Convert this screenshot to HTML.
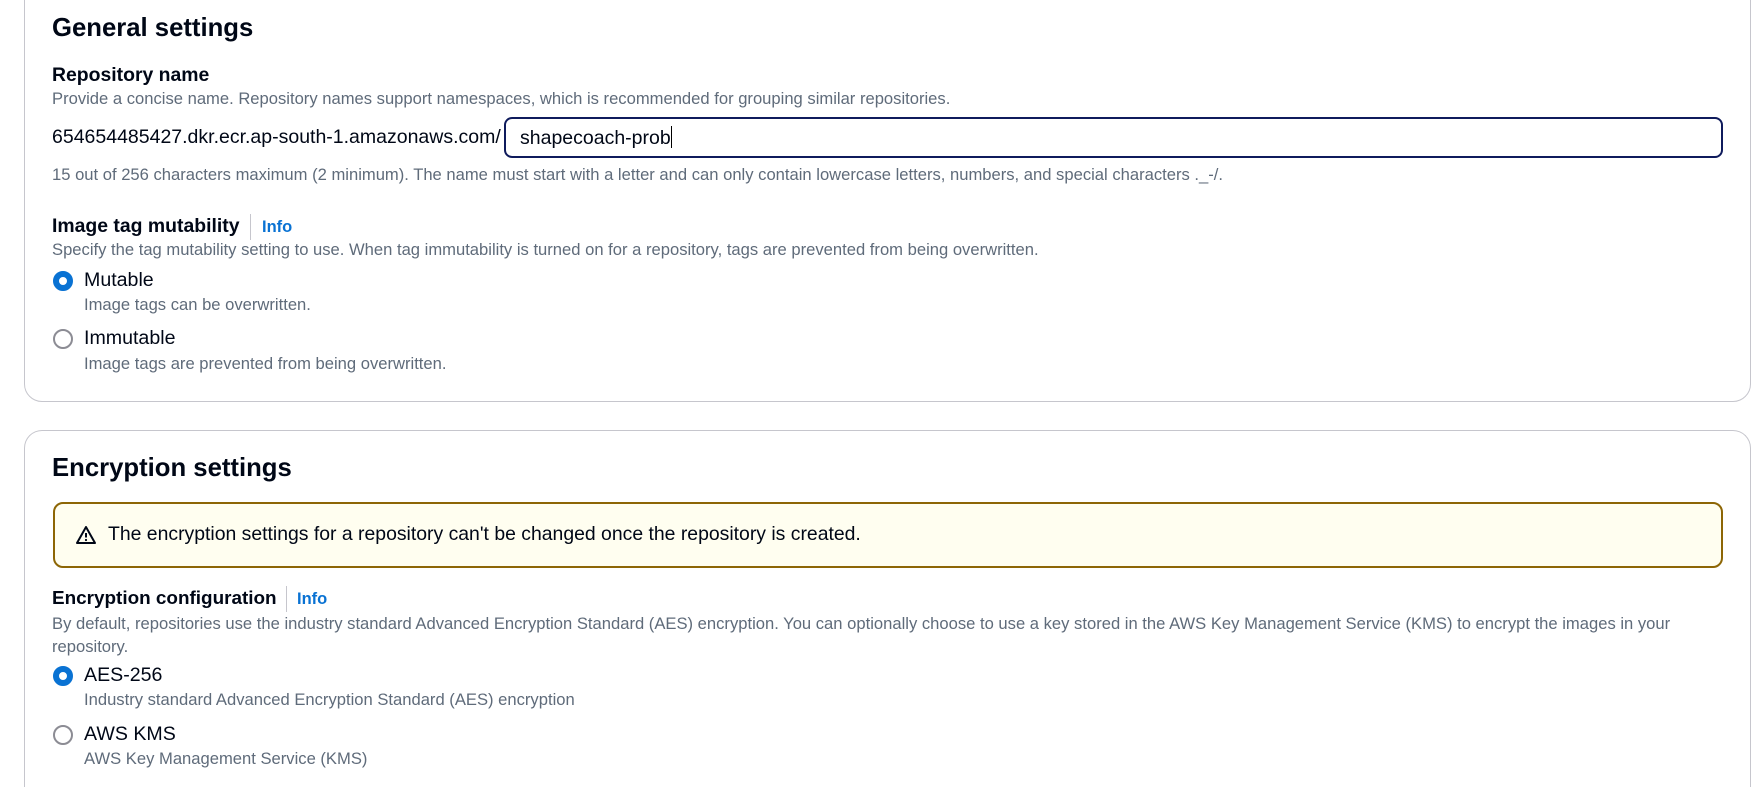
<!DOCTYPE html>
<html><head><meta charset="utf-8"><style>
*{box-sizing:border-box;margin:0;padding:0}
html,body{width:1760px;height:787px;overflow:hidden}
body{background:#fff;font-family:"Liberation Sans",sans-serif;color:#000716;position:relative}
.panel{position:absolute;left:24px;width:1727px;border:1px solid #c6c6cd;border-radius:18px;background:#fff}
.a{position:absolute;white-space:nowrap}
.h{font-size:25.7px;font-weight:bold;left:52px}
.lb{font-size:19.4px;font-weight:bold;left:52px}
.d{font-size:16.6px;color:#5f6b7a;left:52px}
.info{color:#0972d3;font-size:16.5px;font-weight:bold}
.sep{position:absolute;width:1px;height:26px;background:#c6c6cd}
.rl{font-size:19.6px;left:84px}
.rs{font-size:16.6px;color:#5f6b7a;left:84px}
.radio{position:absolute;left:53px;width:20px;height:20px;border-radius:50%}
.on{border:6px solid #0972d3;background:#fff}
.off{border:2px solid #8c8c94;background:#fff}
</style></head><body>
<div class="panel" style="top:-20px;height:422px"></div>
<div class="panel" style="top:430px;height:357px;border-bottom:none;border-radius:18px 18px 0 0"></div>

<div class="a h" style="top:14px">General settings</div>
<div class="a lb" style="top:64px">Repository name</div>
<div class="a d" style="top:89px">Provide a concise name. Repository names support namespaces, which is recommended for grouping similar repositories.</div>
<div class="a" style="left:52px;top:126px;font-size:19.5px">654654485427.dkr.ecr.ap-south-1.amazonaws.com/</div>
<div class="a" style="left:504px;top:117px;width:1219px;height:41px;border:2px solid #0f1b5c;border-radius:8px"></div>
<div class="a" style="left:520px;top:126px;font-size:19.5px">shapecoach-prob<span style="display:inline-block;width:1.5px;height:22px;background:#000;vertical-align:-4px"></span></div>
<div class="a d" style="top:165px">15 out of 256 characters maximum (2 minimum). The name must start with a letter and can only contain lowercase letters, numbers, and special characters ._-/.</div>

<div class="a lb" style="top:215px">Image tag mutability</div>
<div class="sep" style="left:250px;top:214px"></div>
<div class="a info" style="left:262px;top:218px">Info</div>
<div class="a d" style="top:240px">Specify the tag mutability setting to use. When tag immutability is turned on for a repository, tags are prevented from being overwritten.</div>
<div class="radio on" style="top:271px"></div>
<div class="a rl" style="top:269px">Mutable</div>
<div class="a rs" style="top:295px">Image tags can be overwritten.</div>
<div class="radio off" style="top:329px"></div>
<div class="a rl" style="top:327px">Immutable</div>
<div class="a rs" style="top:354px">Image tags are prevented from being overwritten.</div>

<div class="a h" style="top:454px">Encryption settings</div>
<div class="a" style="left:53px;top:502px;width:1670px;height:66px;border:2px solid #8d6605;border-radius:10px;background:#fffef0"></div>
<svg class="a" style="left:75px;top:525px" width="22" height="20" viewBox="0 0 22 20"><path d="M11 2 L20 18 H2 Z" fill="none" stroke="#000716" stroke-width="2" stroke-linejoin="round"/><path d="M11 8 V12.5" stroke="#000716" stroke-width="2"/><circle cx="11" cy="15" r="1.1" fill="#000716"/></svg>
<div class="a" style="left:108px;top:523px;font-size:19.4px">The encryption settings for a repository can't be changed once the repository is created.</div>

<div class="a lb" style="top:588px;font-size:18.9px">Encryption configuration</div>
<div class="sep" style="left:286px;top:586px"></div>
<div class="a info" style="left:297px;top:590px">Info</div>
<div class="a d" style="top:614px">By default, repositories use the industry standard Advanced Encryption Standard (AES) encryption. You can optionally choose to use a key stored in the AWS Key Management Service (KMS) to encrypt the images in your</div>
<div class="a d" style="top:637px">repository.</div>
<div class="radio on" style="top:666px"></div>
<div class="a rl" style="top:664px">AES-256</div>
<div class="a rs" style="top:690px">Industry standard Advanced Encryption Standard (AES) encryption</div>
<div class="radio off" style="top:725px"></div>
<div class="a rl" style="top:723px">AWS KMS</div>
<div class="a rs" style="top:749px">AWS Key Management Service (KMS)</div>
</body></html>
